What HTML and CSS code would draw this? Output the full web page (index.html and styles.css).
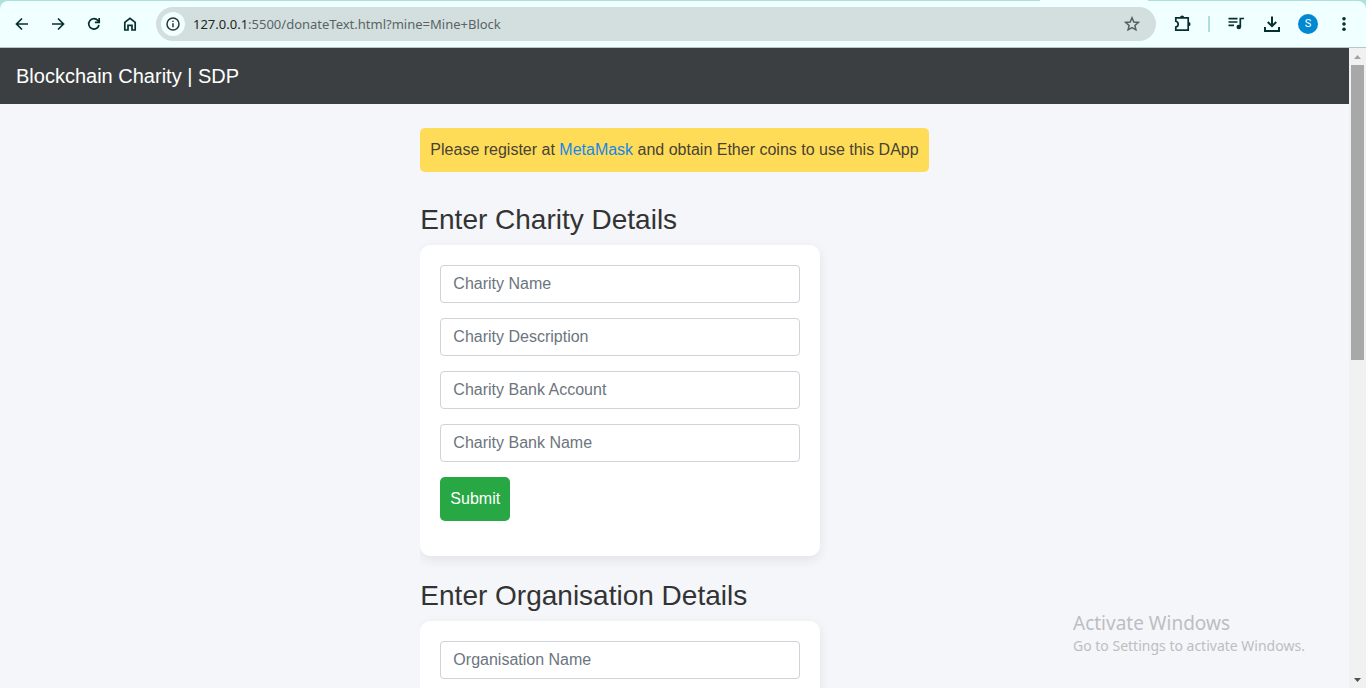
FILE: index.html
```html
<!DOCTYPE html>
<html lang="en">
<head>
<meta charset="utf-8">
<meta name="viewport" content="width=device-width, initial-scale=1">
<title>Blockchain Charity | SDP</title>
<link rel="stylesheet" href="styles.css">
</head>
<body>
<div class="browser">
  <header class="tabstrip">
    <div class="active-tab"></div>
    <div class="toolbar">
      <button class="tool" aria-label="Back"><svg viewBox="0 0 16 16"><path d="M14 8H3M8 2.500L2.500 8L8 13.500"/></svg></button>
      <button class="tool" aria-label="Forward"><svg viewBox="0 0 16 16"><path d="M2 8H13M8 2.500L13.500 8L8 13.500"/></svg></button>
      <button class="tool" aria-label="Reload"><svg viewBox="0 0 16 16"><path d="M13 9A5.200 5.200 0 1 1 11.900 4.500L13 5.700M13.200 2V6.300H8.900"/></svg></button>
      <button class="tool" aria-label="Home"><svg viewBox="0 0 16 16"><path d="M2.800 14V6.400L8 2.300L13.200 6.400V14H10V9.300H6V14Z"/></svg></button>
      <div class="address">
        <button class="site-info" aria-label="View site information"><svg viewBox="0 0 16 16"><circle cx="8" cy="8" r="6"/><path d="M8 7.300V11.300M8 4.700V6.100"/></svg></button>
        <span class="url"><span class="host">127.0.0.1</span>:5500/donateText.html?mine=Mine+Block</span>
        <button class="star" aria-label="Bookmark this tab"><svg viewBox="0 0 16 16"><path d="M8 1.800L9.800 6L14.300 6.400L10.900 9.400L11.900 13.800L8 11.500L4.100 13.800L5.100 9.400L1.700 6.400L6.200 6Z"/></svg></button>
      </div>
      <div class="actions">
        <button class="tool" aria-label="Extensions"><svg class="large thin" viewBox="0 0 20 20"><path d="M3.800 3.900H16.200V16.200H3.800V13C7 12.300 7 8 3.800 7.200Z"/><path class="solid" d="M8 3.500A2.100 2.100 0 0 1 12.200 3.500ZM16.400 7.900A2.200 2.200 0 0 1 16.400 12.300Z"/></svg></button>
        <span class="divider"></span>
        <button class="tool" aria-label="Media controls"><svg class="large thin" viewBox="0 0 20 20"><path d="M2.500 4.700H11.500M2.500 8H11.500M2.500 11.300H8"/><path d="M14.300 13V4.500H18"/><circle class="solid" cx="12.800" cy="13" r="2.300"/></svg></button>
        <button class="tool" aria-label="Downloads"><svg class="large" viewBox="0 0 20 20"><path d="M10 2.500V12M5.800 8L10 12.200L14.200 8M3 13V17H17V13"/></svg></button>
        <button class="avatar" aria-label="Profile">S</button>
        <button class="tool" aria-label="Menu"><svg class="large" viewBox="0 0 20 20"><circle class="solid" cx="10" cy="4.700" r="1.800"/><circle class="solid" cx="10" cy="10" r="1.800"/><circle class="solid" cx="10" cy="15.300" r="1.800"/></svg></button>
      </div>
    </div>
  </header>
  <div class="content">
    <div class="page">
      <nav class="navbar"><a class="brand" href="#">Blockchain Charity | SDP</a></nav>
      <main class="forms">
        <p class="notice">Please register at <a href="#">MetaMask</a> and obtain Ether coins to use this DApp</p>
        <h2 class="title">Enter Charity Details</h2>
        <form class="card">
          <input class="field" type="text" placeholder="Charity Name" aria-label="Charity Name">
          <input class="field" type="text" placeholder="Charity Description" aria-label="Charity Description">
          <input class="field" type="text" placeholder="Charity Bank Account" aria-label="Charity Bank Account">
          <input class="field" type="text" placeholder="Charity Bank Name" aria-label="Charity Bank Name">
          <button class="submit" type="button">Submit</button>
        </form>
        <h2 class="title">Enter Organisation Details</h2>
        <form class="card">
          <input class="field" type="text" placeholder="Organisation Name" aria-label="Organisation Name">
        </form>
      </main>
    </div>
    <div class="scrollbar">
      <svg class="arrow up" viewBox="0 0 17 17"><path d="M5 11L8.500 7L12 11Z"/></svg>
      <div class="track"><div class="thumb"></div></div>
      <svg class="arrow down" viewBox="0 0 17 17"><path d="M5 7L8.500 11L12 7Z"/></svg>
    </div>
  </div>
  <aside class="watermark">
    <p class="watermark-title">Activate Windows</p>
    <p class="watermark-text">Go to Settings to activate Windows.</p>
  </aside>
</div>
</body>
</html>
```
FILE: styles.css
```css
* { box-sizing: border-box; }
body { margin: 0; font-family: "Liberation Sans", Arial, sans-serif; font-size: 16px; line-height: 24px; color: #333; }
button { border: 0; padding: 0; background: none; font: inherit; }
p, h2 { margin: 0; }
.browser { position: relative; display: flex; flex-direction: column; height: 100vh; overflow: hidden; }

.tabstrip { position: relative; flex: none; padding-top: 1px; background: #afdfdb; }
.active-tab { position: absolute; top: 0; right: 218px; width: 108px; height: 1px; background: #f0ffff; }
.toolbar { display: flex; align-items: center; height: 47px; padding: 0 12px 0 4px; background: #f0ffff; border-bottom: 1px solid #b4c9c6; border-radius: 8px 8px 0 0; }
.tool { display: flex; flex: none; align-items: center; justify-content: center; width: 36px; height: 34px; }
svg { width: 16px; height: 16px; fill: none; stroke: #06302e; stroke-width: 1.700; }
svg.large { width: 20px; height: 20px; stroke-width: 2; }
svg.thin { stroke-width: 1.700; }
.solid { fill: #06302e; stroke: none; }
.address { display: flex; flex: 1; align-items: center; height: 34px; margin-left: 8px; padding: 0 16px 0 5px; border-radius: 17px; background: #d3dfdf; }
.site-info { display: flex; align-items: center; justify-content: center; width: 24px; height: 24px; border-radius: 50%; background: #f0ffff; }
.site-info svg { stroke: #333; stroke-width: 1.500; }
.url { flex: 1; margin-left: 8px; font-family: "Noto Sans", "Open Sans", sans-serif; font-size: 13px; line-height: 20px; color: #5a6464; white-space: nowrap; }
.host { color: #1f2424; }
.star { display: flex; }
.star svg { stroke: #555f5f; stroke-width: 1.500; }
.actions { display: flex; align-items: center; margin-left: 8px; margin-right: -8px; }
.divider { width: 2px; height: 16px; margin: 0 8px; background: #afdfdb; }
.avatar { width: 20px; height: 20px; margin: 0 8px; border-radius: 50%; background: #0288d1; color: #fff; font-family: Roboto, sans-serif; font-size: 11px; line-height: 20px; text-align: center; }

.content { display: flex; flex: 1; min-height: 0; }
.page { flex: 1; min-width: 0; overflow: hidden; background: #f4f6fa; }
.navbar { padding: 12px 16px; background: #3c3f42; }
.brand { display: block; color: #fff; font-size: 20px; line-height: 32px; text-decoration: none; }
.forms { width: fit-content; margin: 24px auto 0; overflow: hidden; }
.notice { margin-bottom: 31px; padding: 10px; border-radius: 5px; background: #ffdc57; color: #474235; }
.notice a { color: #1787e8; text-decoration: none; }
.title { margin-bottom: 8px; font-size: 28px; font-weight: 400; line-height: 34px; }
.card { display: flex; flex-direction: column; gap: 15px; max-width: 400px; margin-bottom: 23px; padding: 20px 20px 35px; border-radius: 10px; background: #fff; box-shadow: 0 4px 12px rgba(0, 0, 0, .08); }
.field { width: 100%; height: 38px; padding: 6px 12px; border: 1px solid #ced4da; border-radius: 4px; background: #fff; color: #495057; font: inherit; }
.field::placeholder { color: #6c757d; opacity: 1; }
.submit { align-self: flex-start; padding: 10px; border-radius: 5px; background: #28a745; color: #fff; }

.scrollbar { display: flex; flex: none; flex-direction: column; width: 17px; background: #f1f1f1; }
.arrow { flex: none; width: 17px; height: 17px; stroke: none; }
.up { fill: #a3a3a3; }
.down { fill: #505050; }
.track { flex: 1; padding: 0 2px; }
.thumb { height: 48.7%; background: #a8a8a8; }

.watermark { position: absolute; right: 57px; bottom: 32px; min-width: 236px; font-family: "Noto Sans", "Open Sans", sans-serif; color: #bcbec1; white-space: nowrap; }
.watermark-title { font-size: 19px; line-height: 26px; }
.watermark-text { font-size: 14px; line-height: 20px; }
```
